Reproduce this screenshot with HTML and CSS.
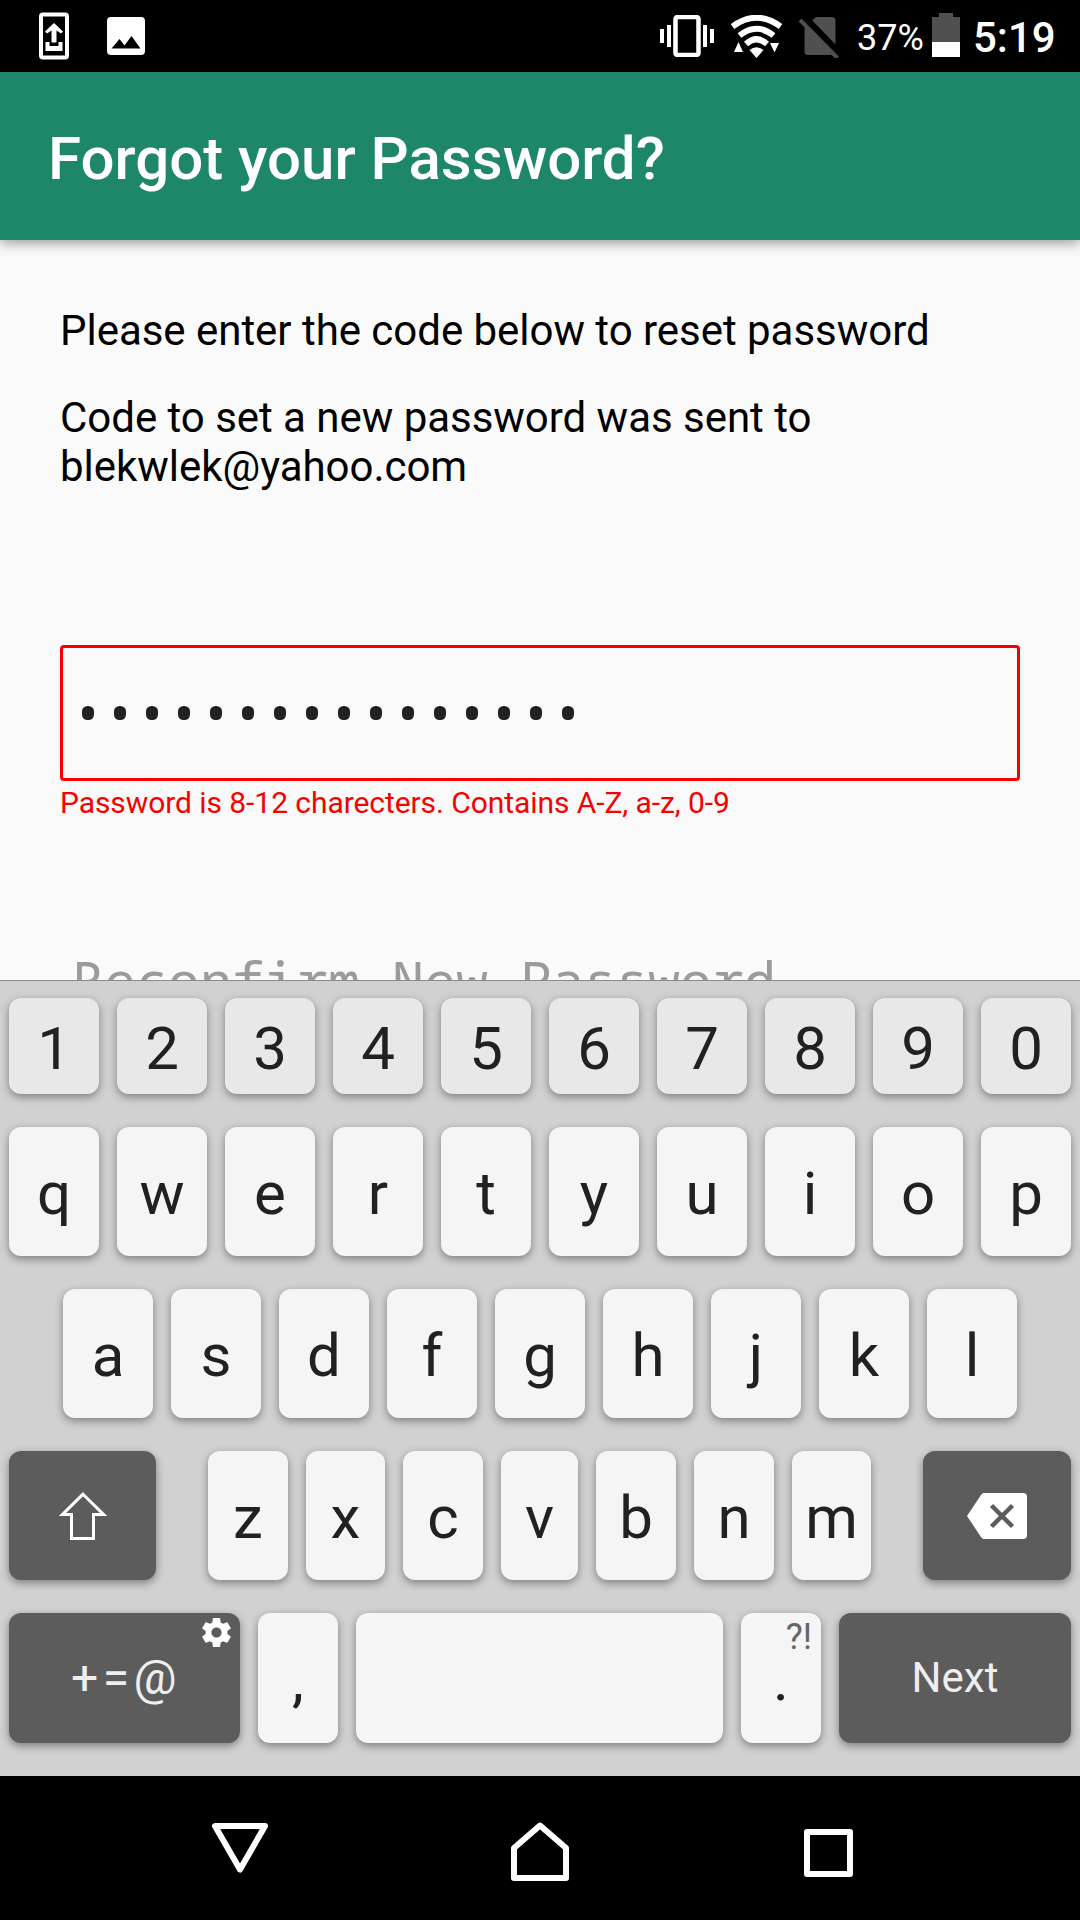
FILE: index.html
```html
<!DOCTYPE html>
<html lang="en">
<head>
<meta charset="utf-8">
<title>Forgot your Password?</title>
<link rel="stylesheet" href="styles.css">
</head>
<body>
<div class="screen">
  <header class="status">
    <div class="status-left">
      <svg width="30" height="48" viewBox="0 0 30 48"><rect x="2" y="2.500" width="26" height="43" rx="2" fill="none" stroke="#fff" stroke-width="4"/><path d="M15 11l9 8.500l-2 2l-4.500-3v12h-5v-12l-4.500 3l-2-2zM6.500 30h4v4h9v-4h4v9h-17z" fill="#fff"/></svg>
      <svg width="38" height="38" viewBox="0 0 38 38"><path fill="#fff" fill-rule="evenodd" d="M4 0h30a4 4 0 0 1 4 4v30a4 4 0 0 1-4 4h-30a4 4 0 0 1-4-4v-30a4 4 0 0 1 4-4zM4.500 31.500h29l-9-12.500l-7 9.500l-5-6.500z"/></svg>
    </div>
    <div class="status-right">
      <svg class="vibrate" width="54" height="42" viewBox="0 0 54 42" fill="#fff"><path d="M0 14h4v14h-4zM7 10h4v22h-4zM43 10h4v22h-4zM50 14h4v14h-4z"/><rect x="15.500" y="2" width="23" height="38" rx="2" fill="none" stroke="#fff" stroke-width="4.500"/></svg>
      <svg class="wifi" width="52" height="44" viewBox="0 0 52 44"><path d="M1.500 11.500Q25.500-6 49.500 11.500M8.500 20.500Q25.500 7 42.500 20.500M15 29Q25.500 19.500 36 29" fill="none" stroke="#fff" stroke-width="6"/><path d="M18.500 35q7-5.500 14 0l-7 8zM3 37l4.500-10l4.500 10zM39 28h9l-4.500 9.500z" fill="#fff"/></svg>
      <svg class="sim" width="40" height="42" viewBox="0 0 40 42"><path d="M17 1h16a3.500 3.500 0 0 1 3.500 3.500v31a3.500 3.500 0 0 1-3.500 3.500h-24a3.500 3.500 0 0 1-3.500-3.500v-24z" fill="#505050"/><path d="M4 0l38 39" stroke="#000" stroke-width="7"/><path d="M1 4l37.500 38" stroke="#505050" stroke-width="4"/></svg>
      <span class="percent">37%</span>
      <svg class="battery" width="28" height="44" viewBox="0 0 28 44"><path d="M0 4h7v-4h14v4h7v25h-28z" fill="#505050"/><path d="M0 29h28v15h-28z" fill="#fff"/></svg>
      <span class="time">5:19</span>
    </div>
  </header>
  <div class="appbar"><h1>Forgot your Password?</h1></div>
  <main>
    <p class="lead">Please enter the code below to reset password</p>
    <p class="sent">Code to set a new password was sent to<br>blekwlek@yahoo.com</p>
    <div class="field"><i></i><i></i><i></i><i></i><i></i><i></i><i></i><i></i><i></i><i></i><i></i><i></i><i></i><i></i><i></i><i></i></div>
    <p class="error">Password is 8-12 charecters. Contains A-Z, a-z, 0-9</p>
    <div class="reconfirm">Reconfirm New Password</div>
  </main>
  <section class="keyboard">
    <div class="row digits"><b>1</b><b>2</b><b>3</b><b>4</b><b>5</b><b>6</b><b>7</b><b>8</b><b>9</b><b>0</b></div>
    <div class="row top"><b>q</b><b>w</b><b>e</b><b>r</b><b>t</b><b>y</b><b>u</b><b>i</b><b>o</b><b>p</b></div>
    <div class="row home"><b>a</b><b>s</b><b>d</b><b>f</b><b>g</b><b>h</b><b>j</b><b>k</b><b>l</b></div>
    <div class="row lower">
      <b class="dark shift"><svg width="48" height="48" viewBox="0 0 48 48"><path d="M24 2.200L44.500 22.500H34.500V46.500H12.500V22.500H3.500z" fill="none" stroke="#fff" stroke-width="3"/></svg></b>
      <b>z</b><b>x</b><b>c</b><b>v</b><b>b</b><b>n</b><b>m</b>
      <b class="dark delete"><svg width="60" height="46" viewBox="0 0 60 46"><path d="M16 0h40a4 4 0 0 1 4 4v38a4 4 0 0 1-4 4h-40l-2-2l-14-21l14-21z" fill="#fff"/><path d="M24.500 12.500l21 21M45.500 12.500l-21 21" stroke="#5c5c5c" stroke-width="4.500"/></svg></b>
    </div>
    <div class="row bottom">
      <b class="dark symbols"><span>+=@</span><svg class="gear" width="35" height="35" viewBox="0 0 24 24"><path fill="#fff" d="M19.430 12.980c.04-.32.07-.64.07-.98s-.03-.66-.07-.98l2.110-1.650c.19-.15.24-.42.12-.64l-2-3.460c-.12-.22-.39-.3-.61-.22l-2.490 1c-.52-.4-1.080-.73-1.690-.98l-.38-2.650C14.460 2.180 14.250 2 14 2h-4c-.25 0-.46.18-.49.42l-.38 2.650c-.61.25-1.170.59-1.690.98l-2.490-1c-.23-.09-.49 0-.61.22l-2 3.460c-.13.22-.07.49.12.64l2.110 1.650c-.04.32-.07.65-.07.98s.03.66.07.98l-2.110 1.650c-.19.15-.24.42-.12.64l2 3.460c.12.22.39.3.61.22l2.490-1c.52.4 1.080.73 1.690.98l.38 2.650c.03.24.24.42.49.42h4c.25 0 .46-.18.49-.42l.38-2.650c.61-.25 1.170-.59 1.690-.98l2.490 1c.23.09.49 0 .61-.22l2-3.460c.12-.22.07-.49-.12-.64l-2.110-1.650zM12 15.500c-1.930 0-3.500-1.570-3.500-3.500s1.570-3.500 3.500-3.500 3.500 1.570 3.500 3.500-1.570 3.500-3.500 3.500z"/></svg></b>
      <b>,</b><b class="space"></b><b class="period">.<span class="alt">?!</span></b>
      <b class="dark next">Next</b>
    </div>
  </section>
  <nav>
    <svg width="64" height="64" viewBox="0 0 64 64"><path d="M7 8h50l-25 43.500z"/></svg>
    <svg width="64" height="64" viewBox="0 0 64 64"><path d="M32 7.500L58 30v30H6V30z"/></svg>
    <svg width="64" height="64" viewBox="0 0 64 64"><path d="M11 14h43v42H11z"/></svg>
  </nav>
</div>
</body>
</html>
```
FILE: styles.css
```css
* { box-sizing: border-box; margin: 0; padding: 0; }
body { background: #000; font-family: Roboto, "Liberation Sans", sans-serif; }
svg { display: block; flex: none; }
.screen { width: 1080px; height: 1920px; display: flex; flex-direction: column; overflow: hidden; }

.status { height: 72px; background: #000; color: #fff; display: flex; justify-content: space-between; }
.status-left { display: flex; align-items: center; gap: 38px; padding-left: 39px; }
.status-right { display: flex; align-items: flex-start; padding-right: 24px; }
.vibrate { margin: 15px 17px 0 0; }
.wifi { margin: 15px 16px 0 0; }
.sim { margin: 16px 18px 0 0; }
.percent { font-size: 36px; line-height: 42px; margin: 17px 8px 0 0; width: 67px; white-space: nowrap; }
.battery { margin: 13px 13px 0 0; }
.time { font-size: 42px; font-weight: 500; line-height: 49px; margin-top: 13px; width: 83px; white-space: nowrap; }

.appbar { height: 168px; background: #1e8768; color: #fff; padding: 52px 48px 0; box-shadow: 0 3px 12px rgba(0, 0, 0, .4); position: relative; }
h1 { font-size: 60px; font-weight: 500; line-height: 70px; white-space: nowrap; }

main { height: 740px; background: #fafafa; padding: 66px 60px 0; overflow: hidden; }
.lead, .sent { font-size: 42px; line-height: 49px; letter-spacing: -.03px; color: #000; white-space: nowrap; }
.sent { margin-top: 38px; }
.field { height: 136px; margin-top: 154px; border: 3px solid #f90000; border-radius: 4px; display: flex; gap: 20px; padding: 58px 19px; }
.field i { width: 12px; height: 14px; border-radius: 5.500px; background: #212121; }
.error { margin-top: 4px; font-size: 30px; line-height: 35px; letter-spacing: -.07px; color: #f90000; white-space: nowrap; }
.reconfirm { margin: 129px 0 0 12px; font: 53.330px/62px "Noto Sans Mono", "DejaVu Sans Mono", monospace; color: #9b9b9b; white-space: nowrap; }

.keyboard { height: 796px; background: #d1d1d1; border-top: 1px solid #8c8c8c; padding: 17px 9px 0; display: flex; flex-direction: column; gap: 33px; }
.row { display: flex; gap: 18px; height: 129px; flex: none; }
.row b { position: relative; width: 90px; border-radius: 12px; background: #f5f5f5; color: #212121; font-size: 60px; font-weight: 400; line-height: 70px; padding-top: 4px; display: flex; align-items: center; justify-content: center; box-shadow: 0 3px 8px rgba(0, 0, 0, .4); }
.digits { height: 96px; }
.digits b { background: #e8e8e8; padding-top: 6px; }
.home { padding-left: 54px; }
.lower b { width: 80px; }
.lower b:nth-child(3), .lower b:nth-child(8) { width: 79px; }
.lower b:nth-child(5) { width: 77px; }
.row .dark { background: #5c5c5c; color: #eee; padding-top: 0; }
.lower .shift { width: 147px; margin-right: 34px; }
.lower .delete { width: 148px; margin-left: 34px; }
.bottom { height: 130px; }
.bottom b { width: 80px; }
.bottom .symbols { width: 231px; font-size: 48px; letter-spacing: 4.500px; padding-left: 3px; }
.bottom .space { width: 367px; }
.bottom .next { width: 232px; font-size: 42px; }
.gear { position: absolute; right: 6px; top: 2px; }
.alt { position: absolute; right: 9px; top: 3px; font-size: 36px; line-height: 42px; color: #666; }

nav { height: 144px; background: #000; display: grid; grid-template-columns: 64px 64px 64px; column-gap: 236px; padding: 42px 0 0 208px; }
nav path { fill: none; stroke: #fff; stroke-width: 6px; stroke-linejoin: round; }
nav svg:last-child { margin-left: -12px; }
```
